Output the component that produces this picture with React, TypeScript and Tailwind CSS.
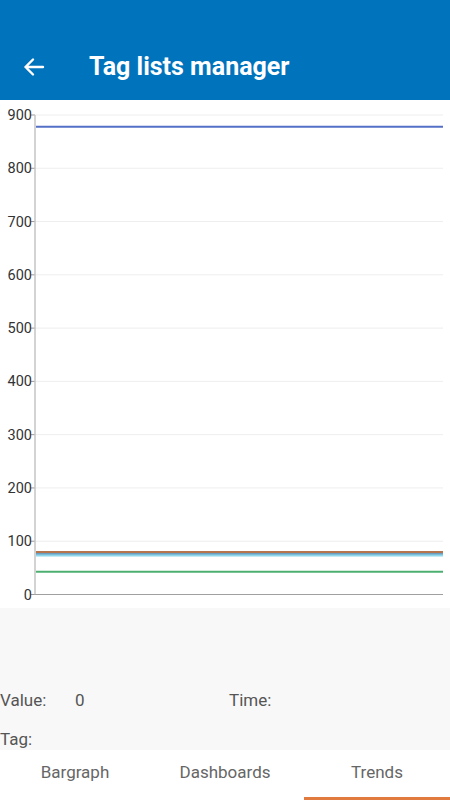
import React from "react";

const TICKS = [900, 800, 700, 600, 500, 400, 300, 200, 100, 0];

// chart geometry (svg coords)
const TOP = 15;
const BOTTOM = 494.5;
const LEFT = 35;
const RIGHT = 443;
const MAX = 900;

const yFor = (v: number) => BOTTOM - ((BOTTOM - TOP) * v) / MAX;

const SERIES = [
  { value: 878, color: "#5470c6" },
  { value: 80, color: "#b5764f" },
  { value: 76, color: "#6a9ec0" },
  { value: 73, color: "#8fd7ea" },
  { value: 42.5, color: "#4caf72" },
];

const TrendChart: React.FC = () => {
  return (
    <svg width="450" height="508" viewBox="0 0 450 508" className="block">
      {TICKS.map((t) => {
        const y = yFor(t);
        return (
          <g key={t}>
            {t !== 0 && (
              <line x1={LEFT} x2={RIGHT} y1={y} y2={y} stroke="#eeeeee" strokeWidth={1} />
            )}
            <line x1={LEFT - 4} x2={LEFT} y1={y} y2={y} stroke="#999" strokeWidth={1} />
            <text
              x={LEFT - 3}
              y={y + 5}
              textAnchor="end"
              fontSize="14.5"
              fill="#333"
              fontFamily="Roboto, 'Liberation Sans', sans-serif"
            >
              {t}
            </text>
          </g>
        );
      })}
      <line x1={LEFT} x2={LEFT} y1={TOP} y2={BOTTOM} stroke="#c4c4c4" strokeWidth={1.5} />
      <line x1={LEFT} x2={RIGHT} y1={BOTTOM} y2={BOTTOM} stroke="#a0a0a0" strokeWidth={1} />
      {SERIES.map((s, i) => (
        <line
          key={i}
          x1={LEFT + 1}
          x2={RIGHT}
          y1={yFor(s.value)}
          y2={yFor(s.value)}
          stroke={s.color}
          strokeWidth={2}
        />
      ))}
    </svg>
  );
};

const App: React.FC = () => {
  const tabs = ["Bargraph", "Dashboards", "Trends"];
  return (
    <div
      className="w-[450px] h-[800px] flex flex-col bg-white overflow-hidden"
      style={{ fontFamily: "Roboto, 'Liberation Sans', sans-serif" }}
    >
      <div className="h-[100px] bg-[#0073bd] flex items-end pb-[20px] shrink-0">
        <div className="flex items-center h-[26px] pl-[22px]">
          <svg width="24" height="24" viewBox="0 0 24 24" fill="none">
            <path
              d="M21 12H3.5M11 4.5L3.5 12L11 19.5"
              stroke="white"
              strokeWidth="2.4"
              strokeLinecap="round"
              strokeLinejoin="round"
            />
          </svg>
          <h1 className="ml-[43px] text-white text-[25px] font-bold tracking-[0px]">
            Tag lists manager
          </h1>
        </div>
      </div>

      <div className="h-[508px] shrink-0 bg-white">
        <TrendChart />
      </div>

      <div className="flex-1 bg-[#f8f8f8] flex flex-col justify-end text-[17px] text-[#555]">
        <div className="flex items-center h-[20px]">
          <span className="w-[75px]">Value:</span>
          <span className="w-[154px]">0</span>
          <span>Time:</span>
        </div>
        <div className="flex items-center h-[20px] mt-[19px]">
          <span>Tag:</span>
        </div>
      </div>

      <div className="h-[50px] shrink-0 bg-white grid grid-cols-3">
        {tabs.map((t, i) => (
          <div key={t} className="relative flex justify-center pt-[10px]">
            <span className={`text-[17px] text-[#666] ${i === 2 ? "pl-[4px]" : ""}`}>{t}</span>
            {i === 2 && (
              <div className="absolute left-[4px] right-0 bottom-0 h-[3px] bg-[#e07a3f]" />
            )}
          </div>
        ))}
      </div>
    </div>
  );
};

export default App;
